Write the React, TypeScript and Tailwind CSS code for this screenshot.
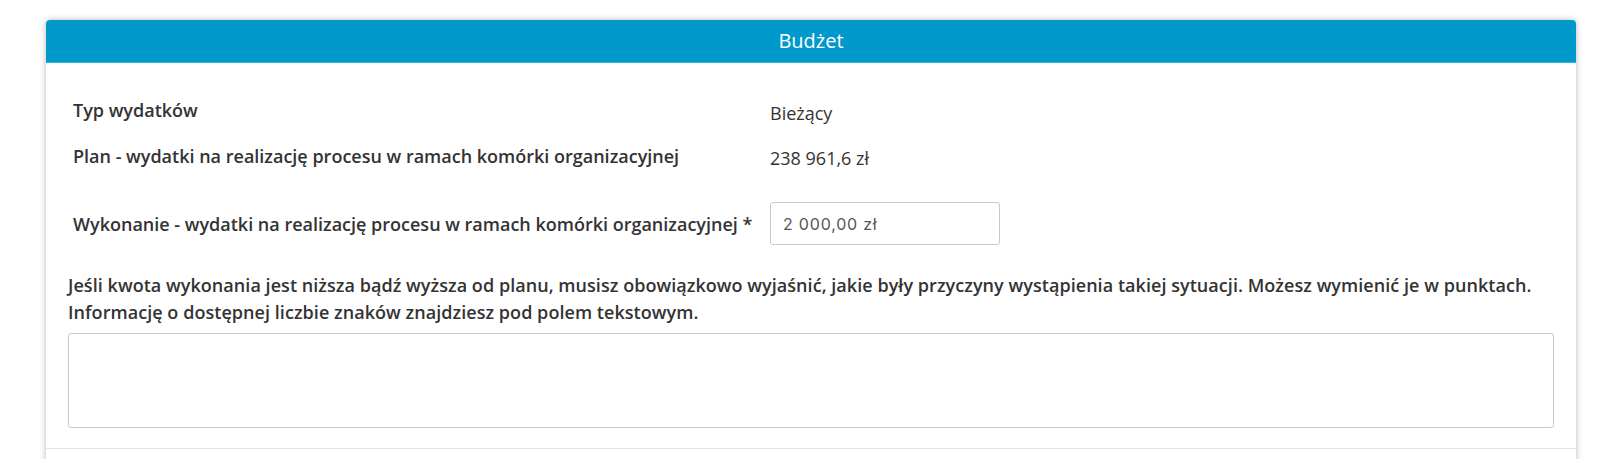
import { useState } from "react";

const labelCls = "w-[697px] shrink-0 text-[18px] leading-6 font-semibold text-[#333]";

const BudgetPanel = () => {
  const [amount, setAmount] = useState("2 000,00 zł");
  const [reason, setReason] = useState("");

  return (
    <div className="w-[1530px] rounded-t-[4px] shadow-[0_0_6px_rgba(0,0,0,0.28)]">
      {/* Header */}
      <div className="h-[43px] rounded-t-[4px] bg-[#0099cc] border-b border-[#33b0dd] flex items-center justify-center text-white text-[20px]">
        Budżet
      </div>

      {/* Body */}
      <div className="bg-white px-[22px] pt-[35px] pb-[20px]">
        <div className="flex items-start pl-[5px] mb-[19px]">
          <div className={labelCls}>Typ wydatków</div>
          <div className="pt-[3px] text-[18px] leading-6 text-[#333]">Bieżący</div>
        </div>

        <div className="flex items-start pl-[5px]">
          <div className={labelCls}>Plan - wydatki na realizację procesu w ramach komórki organizacyjnej</div>
          <div className="pt-[2px] text-[18px] leading-6 text-[#333]">238 961,6 zł</div>
        </div>

        <div className="flex items-center pl-[5px] mt-[32px]">
          <div className={labelCls}>Wykonanie - wydatki na realizację procesu w ramach komórki organizacyjnej *</div>
          <input
            value={amount}
            onChange={(e) => setAmount(e.target.value)}
            className="w-[230px] h-[43px] rounded-[3px] border border-[#c9c9c9] px-[12px] text-[16px] tracking-[0.8px] text-[#555] outline-none font-['Inter',sans-serif]"
          />
        </div>

        <p className="mt-[27px] text-[18px] leading-[27px] font-semibold text-[#333] tracking-[0.05px]">
          Jeśli kwota wykonania jest niższa bądź wyższa od planu, musisz obowiązkowo wyjaśnić, jakie były przyczyny wystąpienia takiej sytuacji. Możesz wymienić je w punktach. Informację o dostępnej liczbie znaków znajdziesz pod polem tekstowym.
        </p>

        <textarea
          value={reason}
          onChange={(e) => setReason(e.target.value)}
          className="mt-[7px] block w-full h-[95px] rounded-[3px] border border-[#c9c9c9] resize-none outline-none p-2"
        />
      </div>

      {/* Footer (cut off) */}
      <div className="bg-white border-t border-[#e3e3e3] h-[40px]" />
    </div>
  );
};

export default function App() {
  return (
    <div className="min-h-screen bg-white pt-[20px] pl-[46px] font-['Open_Sans',sans-serif]">
      <BudgetPanel />
    </div>
  );
}
